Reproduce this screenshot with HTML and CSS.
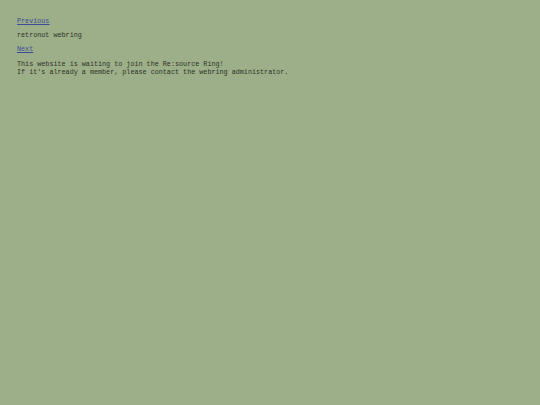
FILE: index.html
```html
<!DOCTYPE html>
<html>
<head>
<meta charset="utf-8">
<link rel="stylesheet" href="styles.css">
</head>
<body>
<div class="ring">
  <p class="row"><a class="link" href="#">Previous</a></p>
  <p class="row">retronut webring</p>
  <p class="row"><a class="link" href="#">Next</a></p>
  <p class="row">This website is waiting to join the Re:source Ring!<br>If it's already a member, please contact the webring administrator.</p>
</div>
</body>
</html>
```
FILE: styles.css
```css
html, body {
  margin: 0;
  background: #9caf88;
}
body {
  padding: 17px 17px;
  font-family: "Liberation Mono", "DejaVu Sans Mono", monospace;
  font-size: 6.75px;
  line-height: 8px;
  color: #2e3328;
}
.row {
  margin: 0 0 6px 0;
}
.row:last-child {
  margin-top: 7px;
}
.link {
  color: #3c4c9c;
  text-decoration: underline;
}
```
